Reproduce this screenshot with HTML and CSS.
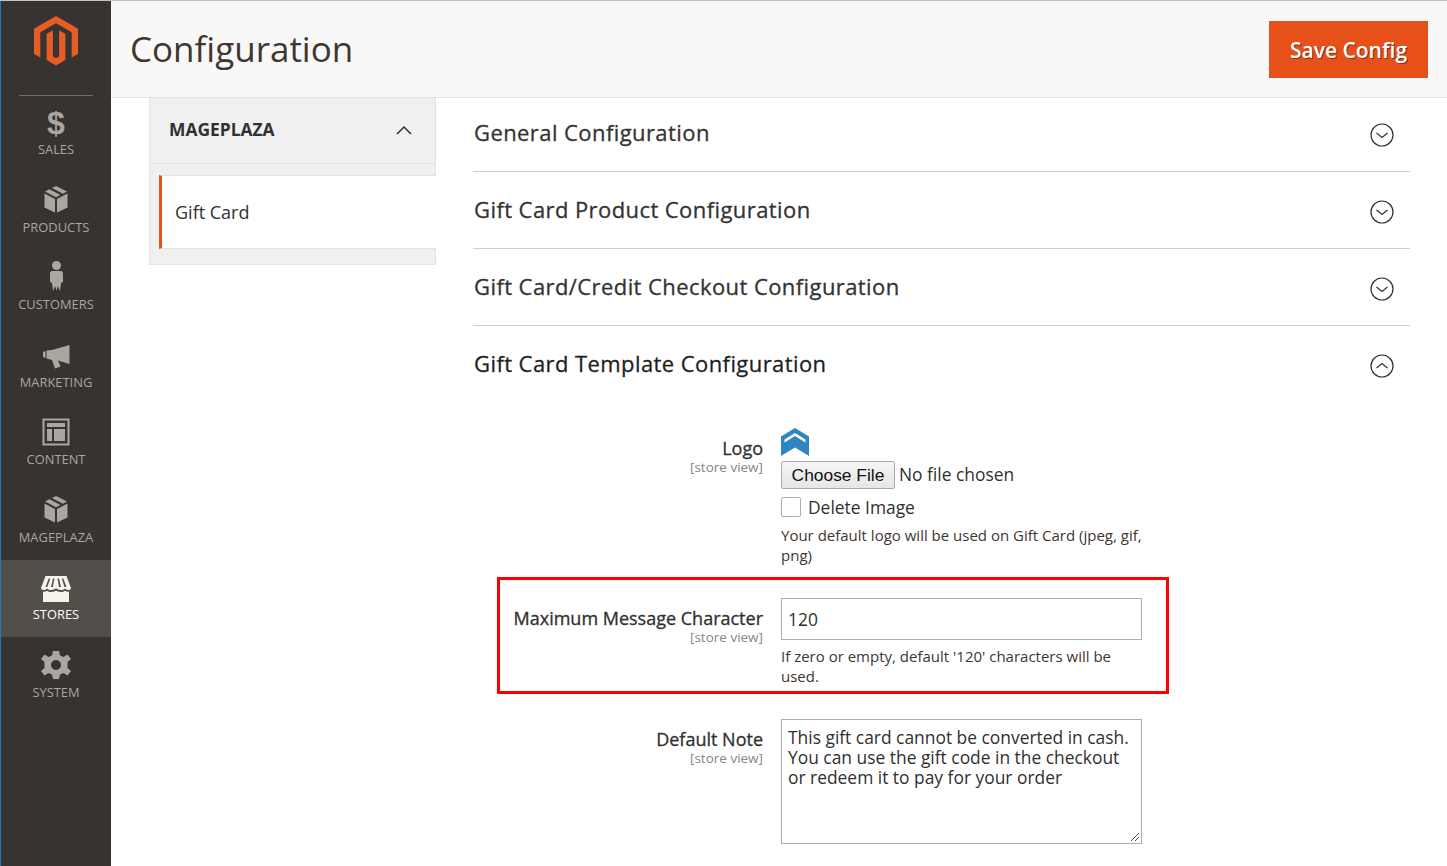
FILE: index.html
```html
<!DOCTYPE html>
<html lang="en">
<head>
<meta charset="utf-8">
<title>Configuration</title>
<link rel="stylesheet" href="styles.css">
</head>
<body>
<div class="app">
  <nav class="sidebar">
    <div class="brand">
      <svg class="brand-logo" viewBox="0 0 44 50" width="44" height="50"><path d="M22 0 44 12.700V38L37.700 41.600V16.300L22 7.300 6.300 16.300V41.600L0 38V12.700Z"/><path d="M22 49.500 12.600 44V17.800L18.900 14.200V40.500L22 42.300 25.100 40.500V14.200L31.400 17.800V44Z"/></svg>
    </div>
    <a class="nav-item">
      <svg class="nav-icon" viewBox="0 0 32 32" width="32" height="32"><text class="dollar" x="16" y="27.500" text-anchor="middle">$</text></svg>
      <span>SALES</span>
    </a>
    <a class="nav-item">
      <svg class="nav-icon" viewBox="0 0 32 32" width="32" height="32"><path d="M16 2 27 7.500 23 9.700 12 4Z"/><path d="M9.500 5.300 20.500 11 16 13.300 5 7.500Z"/><path d="M4.500 9.500 15 15V28.500L4.500 23.500Z"/><path d="M27.500 9.500V23.500L17 28.500V15Z"/></svg>
      <span>PRODUCTS</span>
    </a>
    <a class="nav-item">
      <svg class="nav-icon" viewBox="0 0 32 32" width="32" height="32"><circle cx="16.500" cy="4.500" r="4.500"/><path d="M11.500 10H21.500Q23 10.500 23 12.500V21L21 22 20 30 17.800 25 16.500 30 15.200 25 13 30 12 22 10 21V12.500Q10 10.500 11.500 10Z"/></svg>
      <span>CUSTOMERS</span>
    </a>
    <a class="nav-item">
      <svg class="nav-icon" viewBox="0 0 32 32" width="32" height="32"><path d="M3 13 5.500 12V19L3 18Z"/><path d="M6.500 11.500 12 11 29.500 6V25L18 21.500 20.500 27.500 15 29.500 12 21 6.500 19.500Z"/></svg>
      <span>MARKETING</span>
    </a>
    <a class="nav-item">
      <svg class="nav-icon" viewBox="0 0 32 32" width="32" height="32"><path fill-rule="evenodd" d="M2.500 2.500H29.500V29.500H2.500ZM4.500 4.500V27.500H27.500V4.500Z"/><path d="M7 7H25V11H7Z"/><path d="M7 13H12V25H7Z"/><path d="M14 13H25V25H14Z"/></svg>
      <span>CONTENT</span>
    </a>
    <a class="nav-item">
      <svg class="nav-icon" viewBox="0 0 32 32" width="32" height="32"><path d="M16 2 27 7.500 23 9.700 12 4Z"/><path d="M9.500 5.300 20.500 11 16 13.300 5 7.500Z"/><path d="M4.500 9.500 15 15V28.500L4.500 23.500Z"/><path d="M27.500 9.500V23.500L17 28.500V15Z"/></svg>
      <span>MAGEPLAZA</span>
    </a>
    <a class="nav-item active">
      <svg class="nav-icon" viewBox="0 0 32 32" width="32" height="32"><path fill-rule="evenodd" d="M5.500 5H26.500L31 17Q31 19 28.500 19Q26.500 19 25 17.500Q23.500 19 21.500 19Q19 19 16 17.500Q13 19 10.500 19Q8.500 19 7 17.500Q5.500 19 3.500 19Q1 19 1 17ZM8.700 7.500 5.500 16H7.300L10.300 7.500ZM13 7.500 11 16H12.800L14.500 7.500ZM17.500 7.500 19 16H21L19 7.500ZM21.800 7.500 24.500 16H26.500L23.300 7.500Z"/><path d="M3 20.500Q5.500 21 7 19.800Q8.500 21 10.500 21Q13.500 21 16 19.800Q19 21 21.500 21Q23.500 21 25 19.800Q26.500 21 29 20.500V31H3Z"/></svg>
      <span>STORES</span>
    </a>
    <a class="nav-item">
      <svg class="nav-icon" viewBox="0 0 32 32" width="32" height="32"><path fill-rule="evenodd" d="M13 2H19L20 6.500 23.500 8 27.500 5.500 31 10 27.500 13 27.500 19 31 22 27.500 26.500 23.500 24 20 25.500 19 30H13L12 25.500 8.500 24 4.500 26.500 1 22 4.500 19 4.500 13 1 10 4.500 5.500 8.500 8 12 6.500ZM16 11A5 5 0 1 0 16 21 5 5 0 1 0 16 11Z"/></svg>
      <span>SYSTEM</span>
    </a>
  </nav>
  <div class="page">
    <header class="page-header">
      <h1>Configuration</h1>
      <button class="save" type="button">Save Config</button>
    </header>
    <div class="columns">
      <aside class="tabs">
        <div class="tab-head">
          <strong>MAGEPLAZA</strong>
          <svg viewBox="0 0 16 10" width="16" height="10"><path d="M1 9 8 2 15 9" fill="none" stroke="#303030" stroke-width="1.500"/></svg>
        </div>
        <div class="tab-body">
          <div class="tab-link">Gift Card</div>
        </div>
      </aside>
      <main class="sections">
        <section class="sec">
          <h2>General Configuration</h2>
          <svg class="toggle" viewBox="0 0 24 24" width="24" height="24"><circle cx="12" cy="12" r="11"/><path d="M6.500 10 12 14.500 17.500 10"/></svg>
        </section>
        <section class="sec">
          <h2>Gift Card Product Configuration</h2>
          <svg class="toggle" viewBox="0 0 24 24" width="24" height="24"><circle cx="12" cy="12" r="11"/><path d="M6.500 10 12 14.500 17.500 10"/></svg>
        </section>
        <section class="sec">
          <h2>Gift Card/Credit Checkout Configuration</h2>
          <svg class="toggle" viewBox="0 0 24 24" width="24" height="24"><circle cx="12" cy="12" r="11"/><path d="M6.500 10 12 14.500 17.500 10"/></svg>
        </section>
        <section class="sec open">
          <h2>Gift Card Template Configuration</h2>
          <svg class="toggle" viewBox="0 0 24 24" width="24" height="24"><circle cx="12" cy="12" r="11"/><path d="M6.500 14 12 9.500 17.500 14"/></svg>
        </section>
        <div class="form">
          <div class="row row-logo">
            <div class="label"><label>Logo</label><small>[store view]</small></div>
            <div class="value">
              <svg class="preview" viewBox="0 0 28 28" width="28" height="28"><path fill="#2e86c1" fill-rule="evenodd" d="M14 0 28 8.500V28L14 19.500 0 28V8.500ZM14 5 3.500 11.500V14.500L14 8 24.500 14.500V11.500Z"/></svg>
              <div class="file"><span class="file-btn">Choose File</span><span class="file-name">No file chosen</span></div>
              <div class="check"><span class="box"></span><span>Delete Image</span></div>
              <p class="note">Your default logo will be used on Gift Card (jpeg, gif, png)</p>
            </div>
          </div>
          <div class="row row-max">
            <div class="label"><label>Maximum Message Character</label><small>[store view]</small></div>
            <div class="value">
              <div class="input">120</div>
              <p class="note">If zero or empty, default '120' characters will be used.</p>
            </div>
          </div>
          <div class="row row-note">
            <div class="label"><label>Default Note</label><small>[store view]</small></div>
            <div class="value">
              <div class="area">This gift card cannot be converted in cash. You can use the gift code in the checkout or redeem it to pay for your order
                <svg class="grip" viewBox="0 0 10 10" width="10" height="10"><path d="M1 9 9 1M5 9 9 5" stroke="#555" stroke-width="1" fill="none"/></svg>
              </div>
            </div>
          </div>
        </div>
      </main>
    </div>
  </div>
</div>
</body>
</html>
```
FILE: styles.css
```css
* { box-sizing: border-box; }
html, body { margin: 0; height: 100%; overflow: hidden; }
body { font-family: "Open Sans", sans-serif; color: #303030; background: #fff; }
.app { display: flex; height: 866px; border-top: 1px solid #c4c4c4; }
.sidebar { width: 111px; flex: none; background: #373330; border-left: 1px solid #1979c3; height: 865px; }
.brand { height: 95px; margin: 0 18px -1px; border-bottom: 1px solid #736e69; display: flex; justify-content: center; padding-top: 15px; }
.brand-logo { display: block; }
.brand-logo path { fill: #e85c26; }
.nav-item { display: flex; flex-direction: column; align-items: center; height: 77.5px; padding-top: 11px; color: #aaa6a0; font-size: 12.9px; line-height: 18px; }
.nav-item span { margin-top: 2px; }
.nav-icon { display: block; fill: #aaa6a0; overflow: visible; }
.dollar { font-family: "Liberation Sans", sans-serif; font-weight: 700; font-size: 32px; fill: #aaa6a0; }
.nav-item.active { background: #524e4a; color: #fff; height: 77px; margin-bottom: .5px; }
.active .nav-icon { fill: #f7f3eb; }
.page { flex: 1; min-width: 0; }
.page-header { height: 97px; background: #f8f8f8; border-bottom: 1px solid #e3e3e3; display: flex; align-items: center; justify-content: space-between; padding: 0 19px; }
.page-header h1 { margin: 0 0 2px; font-size: 35px; font-weight: 400; color: #41362f; line-height: 1; }
.save { width: 159px; height: 57px; border: 0; background: #e8501a; color: #fff; font: 600 21px "Open Sans", sans-serif; text-shadow: 1px 1px 0 #8a2f0e; padding: 2px 0 0; }
.columns { display: flex; padding-left: 38px; }
.tabs { width: 287px; flex: none; height: 167px; background: #f0f0f0; border: 1px solid #e3e3e3; border-top: 0; }
.tab-head { height: 66px; border-bottom: 1px solid #e3e3e3; display: flex; align-items: center; justify-content: space-between; padding: 0 23px 4px 19px; font-size: 17.400px; }
.tab-head strong { font-weight: 700; }
.tab-head svg { margin-top: 2px; }
.tab-body { margin-top: 11px; margin-left: 9px; margin-right: -1px; }
.tab-link { height: 74px; background: #fff; border-left: 3px solid #e8501a; border-top: 1px solid #e3e3e3; border-bottom: 1px solid #e3e3e3; display: flex; align-items: center; padding-left: 13px; font-size: 18px; }
.sections { width: 937px; margin-left: 37px; }
.sec { height: 77px; border-bottom: 1px solid #cfcfcf; display: flex; align-items: center; justify-content: space-between; padding: 0 16px 0 1px; }
.sec:first-child { height: 74px; padding-bottom: 4px; }
.sec.open { border-bottom: 0; height: 76px; }
.sec h2 { margin: 0 0 2px; font-size: 22px; font-weight: 400; letter-spacing: .42px; color: #333; -webkit-text-stroke: .3px #333; }
.sec.open h2 { color: #1f1f1f; -webkit-text-stroke: .3px #1f1f1f; }
.toggle { fill: none; stroke: #303030; stroke-width: 1.200; margin-top: 4px; }
.toggle circle, .toggle path { fill: none; }
.form { display: flex; flex-direction: column; margin-top: 24px; margin-left: 24px; width: 672px; }
.row { display: grid; grid-template-columns: 263px 361px; column-gap: 18px; border: 3px solid transparent; padding-right: 24px; }
.row-logo { height: 151px; }
.row-max { border-color: #f00; height: 117px; padding-top: 18px; }
.row-note { margin-top: 10px; padding-top: 12px; }
.label { text-align: right; padding-top: 1px; }
.label label { display: block; font-size: 18px; font-weight: 400; line-height: 24px; color: #303030; -webkit-text-stroke: .3px #303030; }
.row-max .label { padding-top: 8px; }
.row-logo .label { padding-top: 7px; }
.row-note .label { padding-top: 8px; }
.label small { display: block; font-size: 13.500px; line-height: 14px; color: #8a8580; }
.preview { display: block; margin-top: -1px; }
.file { display: flex; align-items: center; margin-top: 5px; font-size: 17.400px; color: #303030; }
.file-btn { width: 114px; height: 28px; display: flex; align-items: center; justify-content: center; border: 1px solid #a9a9a9; border-radius: 2px; background: linear-gradient(#f5f5f5, #e6e6e6); font: 17.400px "Liberation Sans", sans-serif; color: #111; }
.file-name { margin: 0 0 2px 4px; }
.check { display: flex; align-items: center; gap: 7px; margin-top: 6px; font-size: 17.400px; line-height: 24px; }
.box { width: 20px; height: 20px; border: 1px solid #adadad; border-radius: 2px; }
.note { margin: 6px 0 0; font-size: 15px; line-height: 20px; color: #41362f; }
.input { height: 42px; border: 1px solid #adadad; padding: 0 6px; font-size: 17.400px; line-height: 40px; }
.area { position: relative; height: 125px; border: 1px solid #adadad; padding: 7px 6px; font-size: 17.400px; line-height: 20px; }
.grip { position: absolute; right: 1px; bottom: 1px; }
```
